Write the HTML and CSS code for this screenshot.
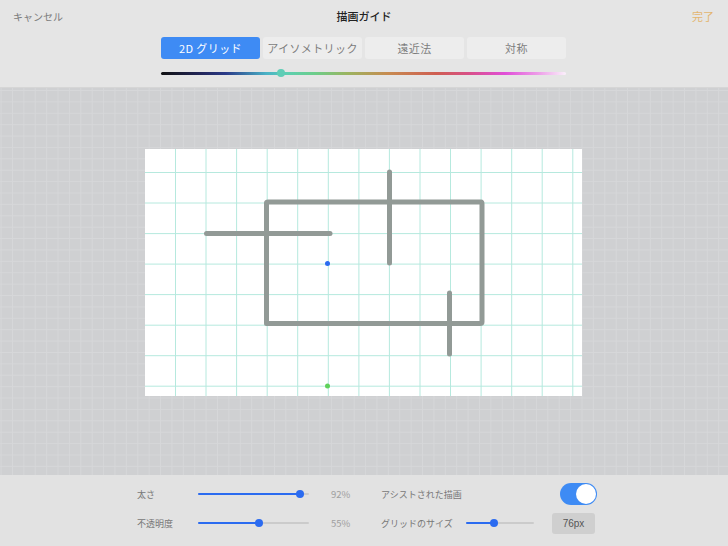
FILE: index.html
```html
<!DOCTYPE html>
<html lang="ja">
<head>
<meta charset="utf-8">
<link rel="stylesheet" href="styles.css">
</head>
<body>
<div class="app">
  <header class="top">
    <div class="nav">
      <span class="nav-cancel">キャンセル</span>
      <span class="nav-title">描画ガイド</span>
      <span class="nav-done">完了</span>
    </div>
    <div class="segments">
      <div class="seg seg-active">2D グリッド</div>
      <div class="seg">アイソメトリック</div>
      <div class="seg">遠近法</div>
      <div class="seg">対称</div>
    </div>
    <div class="hue">
      <div class="hue-bar"></div>
      <div class="hue-knob"></div>
    </div>
  </header>

  <main class="stage">
    <div class="paper">
      <svg width="437" height="247" viewBox="0 0 437 247">
        <g stroke="#b6e9de" stroke-width="1">
          <line x1="30.5" y1="0" x2="30.5" y2="247"/>
          <line x1="61" y1="0" x2="61" y2="247"/>
          <line x1="91.6" y1="0" x2="91.6" y2="247"/>
          <line x1="122.2" y1="0" x2="122.2" y2="247"/>
          <line x1="152.7" y1="0" x2="152.7" y2="247"/>
          <line x1="183.3" y1="0" x2="183.3" y2="247"/>
          <line x1="213.9" y1="0" x2="213.9" y2="247"/>
          <line x1="244.4" y1="0" x2="244.4" y2="247"/>
          <line x1="275" y1="0" x2="275" y2="247"/>
          <line x1="305.5" y1="0" x2="305.5" y2="247"/>
          <line x1="336.1" y1="0" x2="336.1" y2="247"/>
          <line x1="366.7" y1="0" x2="366.7" y2="247"/>
          <line x1="397.2" y1="0" x2="397.2" y2="247"/>
          <line x1="427.8" y1="0" x2="427.8" y2="247"/>
          <line x1="0" y1="23.5" x2="437" y2="23.5"/>
          <line x1="0" y1="54" x2="437" y2="54"/>
          <line x1="0" y1="84.6" x2="437" y2="84.6"/>
          <line x1="0" y1="115.1" x2="437" y2="115.1"/>
          <line x1="0" y1="145.6" x2="437" y2="145.6"/>
          <line x1="0" y1="176.2" x2="437" y2="176.2"/>
          <line x1="0" y1="206.7" x2="437" y2="206.7"/>
          <line x1="0" y1="237.2" x2="437" y2="237.2"/>
        </g>
        <g stroke="#929a96" stroke-width="5" stroke-linecap="round" stroke-linejoin="round" fill="none">
          <line x1="61.5" y1="84.5" x2="185" y2="84.5"/>
          <path d="M121.5 174 L121.5 54 Q121.5 53 123 53 L336 53 Q337 53 337 55 L337 173 Q337 174.5 335 174.5 L121.5 174.5"/>
          <line x1="244.5" y1="23" x2="244.5" y2="114"/>
          <line x1="304.5" y1="144" x2="304.5" y2="205"/>
        </g>
        <circle cx="182.5" cy="114.5" r="2.5" fill="#2b6bf0"/>
        <circle cx="182.5" cy="237" r="2.5" fill="#5fd15a"/>
      </svg>
    </div>
  </main>

  <footer class="panel">
    <div class="col col-left">
      <div class="row">
        <span class="label">太さ</span>
        <div class="slider slider-wide"><div class="fill" style="width:92%"></div><div class="knob" style="left:92%"></div></div>
        <span class="value">92%</span>
      </div>
      <div class="row">
        <span class="label">不透明度</span>
        <div class="slider slider-wide"><div class="fill" style="width:55%"></div><div class="knob" style="left:55%"></div></div>
        <span class="value">55%</span>
      </div>
    </div>
    <div class="col col-right">
      <div class="row">
        <span class="label label-long">アシストされた描画</span>
        <div class="toggle"><div class="toggle-knob"></div></div>
      </div>
      <div class="row">
        <span class="label label-mid">グリッドのサイズ</span>
        <div class="slider slider-short"><div class="fill" style="width:41%"></div><div class="knob" style="left:41%"></div></div>
        <div class="size-btn">76px</div>
      </div>
    </div>
  </footer>
</div>
</body>
</html>
```

FILE: styles.css
```css
* { box-sizing: border-box; }
html, body { margin: 0; padding: 0; }
body {
  width: 728px;
  height: 546px;
  overflow: hidden;
  font-family: "Noto Sans CJK JP", "Noto Sans", sans-serif;
  background: #e4e4e4;
}
.app {
  display: flex;
  flex-direction: column;
  width: 728px;
  height: 546px;
}
.top {
  height: 88px;
  background: #e5e5e5;
  border-bottom: 1px solid #d6d6d6;
  display: flex;
  flex-direction: column;
  align-items: center;
}
.nav {
  width: 100%;
  height: 32px;
  display: flex;
  justify-content: space-between;
  align-items: center;
  padding: 0 14px 0 13px;
  position: relative;
}
.nav-cancel { font-size: 10px; color: #7a7a7a; }
.nav-done { font-size: 11px; color: #e3b56f; }
.nav-title {
  position: absolute;
  left: 0; right: 0;
  text-align: center;
  font-size: 11px;
  color: #222;
  font-weight: 500;
}
.segments {
  margin-top: 5px;
  width: 405px;
  margin-left: -1px;
  display: flex;
  gap: 3px;
}
.seg {
  flex: 1;
  height: 22px;
  border-radius: 3px;
  background: #ededed;
  color: #7d7d7d;
  font-size: 11px;
  display: flex;
  align-items: center;
  justify-content: center;
  letter-spacing: 0.4px;
}
.seg-active {
  background: #3e8bf4;
  color: #fff;
}
.hue {
  position: relative;
  width: 405px;
  margin-left: -1px;
  height: 8px;
  margin-top: 10px;
}
.hue-bar {
  margin-top: 3px;
  height: 3px;
  border-radius: 2px;
  background: linear-gradient(to right, #111 0%, #22265a 10%, #2a3a88 16%, #4ab2c6 26%, #5ccfb2 31%, #6ccd8a 38%, #9bb460 46%, #c78b50 56%, #cf5e52 68%, #d85088 76%, #e04fd8 85%, #ed9ce8 93%, #fbf0fb 100%);
}
.hue-knob {
  position: absolute;
  left: 116px;
  top: 0;
  width: 8px;
  height: 8px;
  border-radius: 50%;
  background: #5fcdb6;
}
.stage {
  height: 387px;
  background-color: #cfd0d2;
  background-image:
    linear-gradient(to right, #d6d7d9 1px, transparent 1px),
    linear-gradient(to bottom, #d6d7d9 1px, transparent 1px);
  background-size: 11.4px 11.4px;
  background-position: 0.6px 2px;
  display: flex;
  justify-content: center;
  align-items: flex-start;
  padding-top: 61px;
}
.paper {
  width: 437px;
  height: 247px;
  background: #fff;
  margin-left: -1px;
}
.paper svg { display: block; }
.panel {
  flex: 1;
  background: #e2e2e2;
  display: flex;
  padding: 8px 0 0 137px;
}
.col {
  display: flex;
  flex-direction: column;
  gap: 7px;
}
.col-left { width: 244px; }
.row {
  height: 22px;
  display: flex;
  align-items: center;
}
.label {
  font-size: 9px;
  color: #777;
  width: 61px;
  flex: none;
}
.label-long { width: 179px; }
.label-mid { width: 85px; }
.value {
  font-size: 9.5px;
  color: #a0a0a0;
  margin-left: 22px;
}
.slider {
  position: relative;
  height: 2px;
  background: #cbcbcb;
  border-radius: 1px;
  flex: none;
}
.slider-wide { width: 111px; }
.slider-short { width: 68px; }
.fill {
  height: 2px;
  background: #2b6bf0;
  border-radius: 1px;
}
.knob {
  position: absolute;
  top: -3px;
  width: 8px;
  height: 8px;
  margin-left: -4px;
  border-radius: 50%;
  background: #2b6bf0;
}
.toggle {
  width: 37px;
  height: 22px;
  border-radius: 11px;
  background: #3e8bf4;
  position: relative;
}
.toggle-knob {
  position: absolute;
  right: 1px;
  top: 1px;
  width: 20px;
  height: 20px;
  border-radius: 50%;
  background: #fff;
}
.size-btn {
  margin-left: 18px;
  width: 43px;
  height: 21px;
  border-radius: 3px;
  background: #cfcfcf;
  color: #555;
  font-size: 10px;
  font-family: "Liberation Sans", sans-serif;
  display: flex;
  align-items: center;
  justify-content: center;
}
```
